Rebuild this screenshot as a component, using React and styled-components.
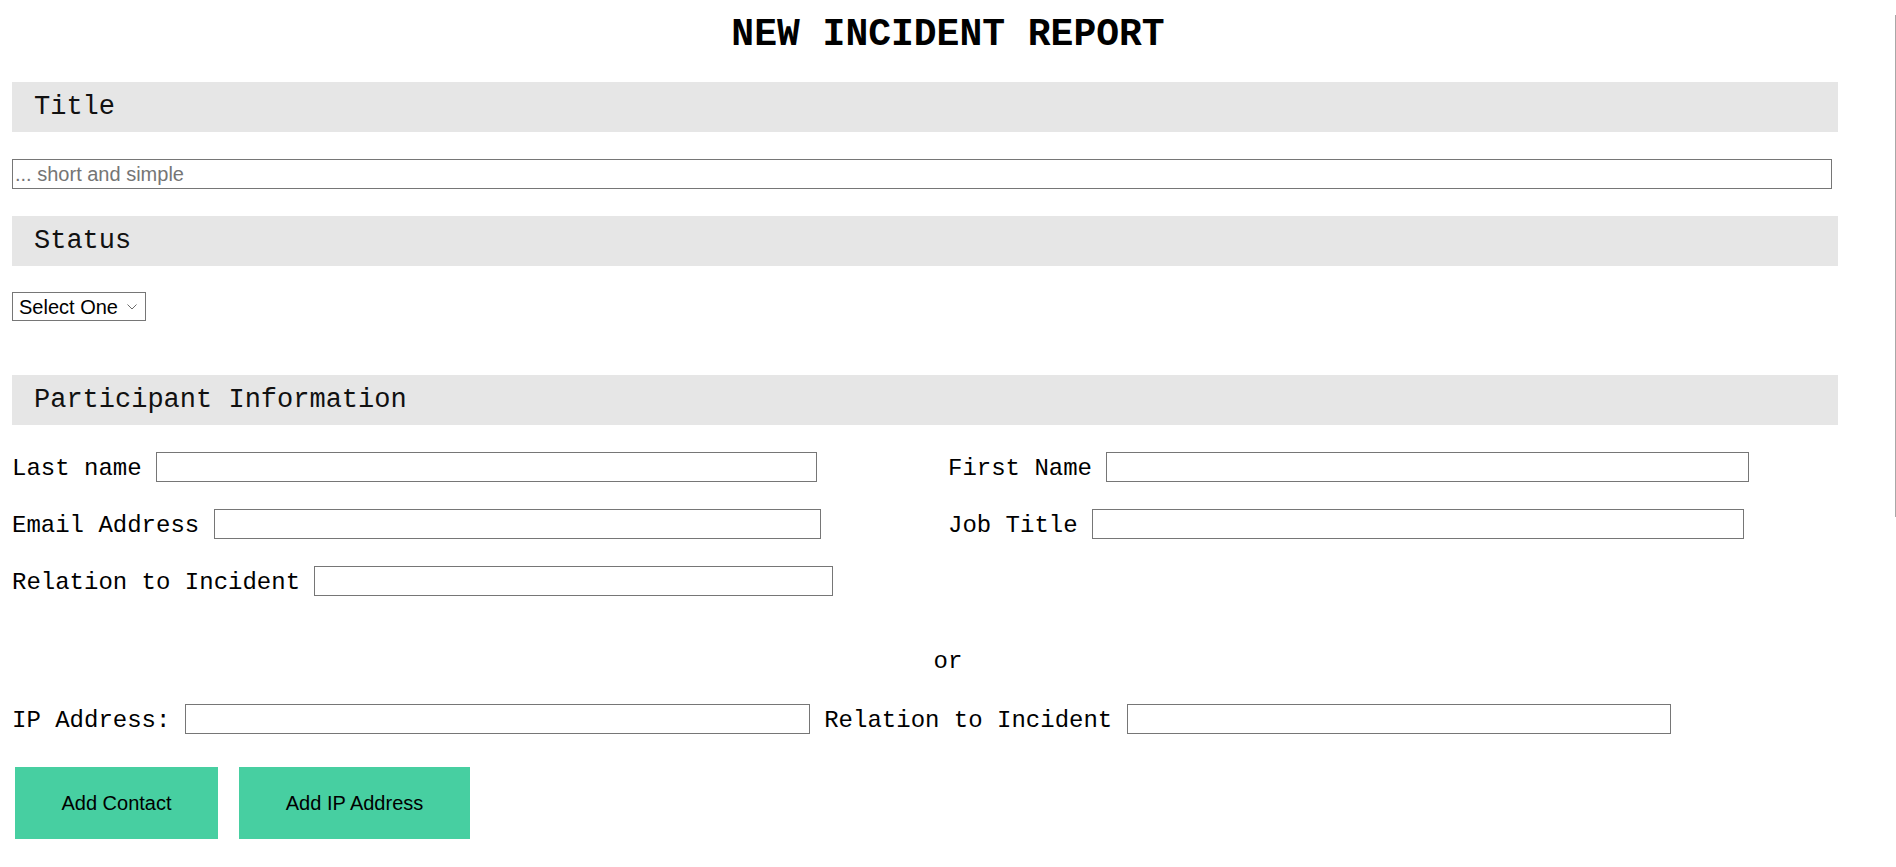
import React, { useState } from "react";
import styled, { createGlobalStyle } from "styled-components";

const GlobalStyle = createGlobalStyle`
    body {
        margin: 0;
        background-color: #fff;
        font-family: "Courier New", "Liberation Mono", monospace;
        color: #000;
    }
`;

const Page = styled.form`
    padding: 0 12px 28px;
`;

const Heading = styled.h1`
    margin: 0 0 28px;
    padding-top: 16px;
    font-size: 38px;
    line-height: 38px;
    font-weight: bold;
    text-align: center;
`;

const SectionBar = styled.div`
    display: flex;
    align-items: center;
    height: 50px;
    margin-right: 46px;
    margin-top: ${(p) => p.$top || 0}px;
    padding: 0 22px;
    background-color: #e6e6e6;
    font-size: 27px;
    color: #111;
`;

const TextInput = styled.input`
    box-sizing: border-box;
    width: ${(p) => p.$width}px;
    height: 30px;
    padding: 1px 2px;
    border: 1px solid #767676;
    border-radius: 0;
    font-family: "Liberation Sans", Arial, sans-serif;
    font-size: 20px;
    color: #000;
    background: #fff;
    outline: none;
    &::placeholder {
        color: #757575;
    }
`;

const TitleInput = styled(TextInput)`
    display: block;
    margin-top: 27px;
`;

const SelectWrap = styled.div`
    position: relative;
    display: inline-block;
    margin-top: 26px;
`;

const Select = styled.select`
    appearance: none;
    box-sizing: border-box;
    width: 134px;
    height: 29px;
    padding: 0 0 0 6px;
    border: 1px solid #767676;
    border-radius: 0;
    background: #fff;
    font-family: "Liberation Sans", Arial, sans-serif;
    font-size: 20px;
    color: #000;
`;

const Chevron = styled.svg`
    position: absolute;
    right: 9px;
    top: 12px;
    pointer-events: none;
`;

const Columns = styled.div`
    display: grid;
    grid-template-columns: 936px 1fr;
    margin-top: 27px;
`;

const Column = styled.div`
    display: flex;
    flex-direction: column;
    gap: 27px;
`;

const Row = styled.div`
    display: flex;
    align-items: center;
    gap: 14.4px;
    height: 30px;
`;

const Label = styled.label`
    font-size: 24px;
    line-height: 30px;
    white-space: pre;
    padding-top: 3px;
`;

const Or = styled.div`
    margin: 52px 0 28px;
    font-size: 24px;
    line-height: 28px;
    text-align: center;
`;

const ButtonRow = styled.div`
    display: flex;
    gap: 21px;
    margin-top: 33px;
    padding-left: 3px;
`;

const Button = styled.button`
    width: ${(p) => p.$width}px;
    height: 72px;
    border: none;
    border-radius: 0;
    background-color: #47cfa1;
    color: #000;
    font-family: "Liberation Sans", Arial, sans-serif;
    font-size: 20px;
    cursor: pointer;
`;

const ScrollEdge = styled.div`
    position: fixed;
    top: 15px;
    right: 0;
    width: 1px;
    height: 502px;
    background-color: #a8a8a8;
`;

const leftFields = [
    { label: "Last name", width: 661 },
    { label: "Email Address", width: 607 },
    { label: "Relation to Incident", width: 519 },
];

const rightFields = [
    { label: "First Name", width: 643 },
    { label: "Job Title", width: 652 },
];

export default function App() {
    const [status, setStatus] = useState("");
    return (
        <>
            <GlobalStyle />
            <Page onSubmit={(e) => e.preventDefault()}>
                <Heading>NEW INCIDENT REPORT</Heading>
                <SectionBar>Title</SectionBar>
                <TitleInput type="text" placeholder="... short and simple" $width={1820} />
                <SectionBar $top={27}>Status</SectionBar>
                <SelectWrap>
                    <Select value={status} onChange={(e) => setStatus(e.target.value)}>
                        <option value="">Select One</option>
                        <option value="open">Open</option>
                        <option value="closed">Closed</option>
                    </Select>
                    <Chevron width="10" height="6" viewBox="0 0 10 6">
                        <path d="M0.5 0.5 L5 5 L9.5 0.5" fill="none" stroke="#6b6b6b" strokeWidth="1" />
                    </Chevron>
                </SelectWrap>
                <SectionBar $top={54}>Participant Information</SectionBar>
                <Columns>
                    <Column>
                        {leftFields.map((f) => (
                            <Row key={f.label}>
                                <Label>{f.label}</Label>
                                <TextInput type="text" $width={f.width} />
                            </Row>
                        ))}
                    </Column>
                    <Column>
                        {rightFields.map((f) => (
                            <Row key={f.label}>
                                <Label>{f.label}</Label>
                                <TextInput type="text" $width={f.width} />
                            </Row>
                        ))}
                    </Column>
                </Columns>
                <Or>or</Or>
                <Row>
                    <Label>IP Address:</Label>
                    <TextInput type="text" $width={625} />
                    <Label>Relation to Incident</Label>
                    <TextInput type="text" $width={544} />
                </Row>
                <ButtonRow>
                    <Button type="button" $width={203}>Add Contact</Button>
                    <Button type="button" $width={231}>Add IP Address</Button>
                </ButtonRow>
            </Page>
            <ScrollEdge />
        </>
    );
}
